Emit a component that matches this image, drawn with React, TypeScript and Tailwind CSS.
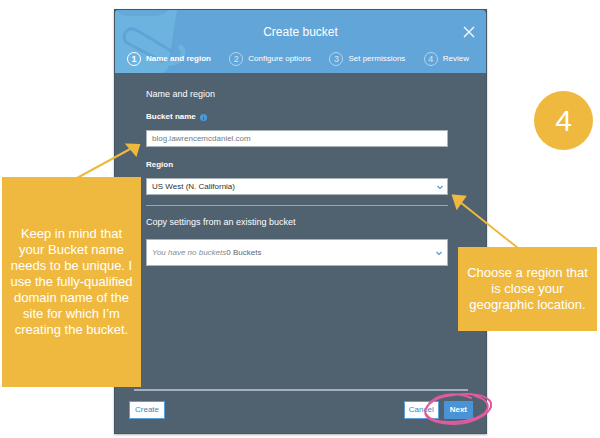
import React from "react";

const steps = ["Name and region", "Configure options", "Set permissions", "Review"];

function BucketArt() {
  return (
    <svg className="absolute left-0 top-0 h-[63px] w-[72px]" viewBox="0 0 72 63" aria-hidden="true">
      <path d="M0 0H62L53 58Q52 62 46 63H0Z" fill="#6cb3e0" />
      <path d="M1 0H53Q51 5 40 6H12Q4 5 1 0Z" fill="#64a9da" />
      <path d="M64 36Q70 40 67 47Q63 54 53 53" fill="none" stroke="#6cb3e0" strokeWidth="5" />
      <path d="M58 42L23 21Q14 16 10 23Q7 30 14 34L48 52" fill="none" stroke="#5fa4d6" strokeWidth="3" />
    </svg>
  );
}

function Chevron() {
  return (
    <svg className="pointer-events-none absolute right-1 top-1/2 h-2 w-2 -translate-y-1/2" viewBox="0 0 8 8" aria-hidden="true">
      <path d="M1.500 3L4 5.500L6.500 3" fill="none" stroke="#4c9bd6" strokeWidth="1.2" />
    </svg>
  );
}

function Dialog() {
  return (
    <section role="dialog" aria-labelledby="title" className="ml-[19%] mr-[113px] mt-[9px] border border-[#465763] bg-[#50626f] shadow-[0_1px_2px_rgba(0,0,0,0.3)]">
      <header className="relative overflow-hidden rounded-t-sm bg-[#62a5d8] px-3 pb-[7px] pt-[14px]">
        <BucketArt />
        <div className="relative flex items-center justify-center">
          <h1 id="title" className="text-[12px] leading-[16px]">Create bucket</h1>
          <button aria-label="Close" className="absolute -right-px flex h-3 w-3 items-center justify-center">
            <svg className="h-3 w-3" viewBox="0 0 12 12" aria-hidden="true">
              <path d="M1 1L11 11M11 1L1 11" stroke="#fff" strokeWidth="1.2" />
            </svg>
          </button>
        </div>
        <ol className="relative mt-[12px] flex justify-between pr-[5px]">
          {steps.map((step, i) => (
            <li key={step} className={i === 0 ? "flex items-center gap-[5px] text-[8px] font-bold" : "flex items-center gap-[5px] text-[8px]"}>
              <span className={i === 0 ? "flex h-[14px] w-[14px] items-center justify-center rounded-full border border-white text-[9px] leading-[12px]" : "flex h-[14px] w-[14px] items-center justify-center rounded-full border border-[#b4d5ed] text-[9px] leading-[12px] text-[#d3e6f5]"}>
                {i + 1}
              </span>
              <span className="leading-[12px]">{step}</span>
            </li>
          ))}
        </ol>
      </header>

      <form onSubmit={(e) => e.preventDefault()}>
        <div className="pl-[31px] pr-[38px]">
          <h2 className="pt-[15px] text-[9px] leading-[12px]">Name and region</h2>
          <div className="mt-[12px] flex items-center gap-1 text-[8px] font-bold leading-[10px]">
            <label htmlFor="bucket">Bucket name</label>
            <svg className="h-[7px] w-[7px]" viewBox="0 0 8 8" aria-hidden="true">
              <circle cx="4" cy="4" r="4" fill="#4c9bdc" />
              <path d="M4 1.3V2.4M4 3.3V6.5" stroke="#50626f" strokeWidth="1.3" />
            </svg>
          </div>
          <input id="bucket" defaultValue="blog.lawrencemcdaniel.com" className="mt-[8px] block h-[17px] w-full border border-[#aab4bb] bg-white px-[5px] text-[8px] text-[#737b80] outline-none" />
          <label htmlFor="region" className="mt-[13px] block text-[8px] font-bold leading-[10px]">Region</label>
          <div className="relative mt-[8px]">
            <select id="region" className="block h-[17px] w-full appearance-none border border-[#aab4bb] bg-white px-[5px] text-[8px] text-[#333] outline-none">
              <option>US West (N. California)</option>
            </select>
            <Chevron />
          </div>
          <hr className="mt-[10px] border-[#9aa6ae]" />
          <label htmlFor="copy" className="mt-[10px] block text-[9px] leading-[12px]">Copy settings from an existing bucket</label>
          <div className="relative mt-[11px] flex h-[27px] items-center border border-[#aab4bb] bg-white pl-[5px] text-[8px]">
            <span className="italic text-[#858c91]">You have no buckets</span>
            <select id="copy" className="h-full flex-1 appearance-none bg-white text-[#666] outline-none">
              <option>0 Buckets</option>
            </select>
            <Chevron />
          </div>
        </div>
        <footer className="pb-[14px] pl-[14px] pr-[13px] pt-[123px] text-[8px] leading-[10px]">
          <div className="mx-[5px] h-[2px] bg-[#a5afb9]" />
          <div className="mt-[10px] flex gap-[5px]">
            <button type="button" className="mr-auto h-[18px] border border-[#5ba0d6] bg-white px-[5px] text-[#3f84b8]">Create</button>
            <button type="button" className="h-[18px] border border-[#5ba0d6] bg-white px-[4px] text-[#3f84b8]">Cancel</button>
            <button type="submit" className="h-[18px] bg-[#4a94d5] px-[6px] font-bold">Next</button>
          </div>
        </footer>
      </form>
    </section>
  );
}

export default function App() {
  return (
    <main className="relative flow-root overflow-hidden bg-white pb-[3px] font-['Liberation_Sans',Arial,sans-serif] text-white">
      <Dialog />
      <svg className="pointer-events-none absolute left-0 top-0 h-[438px] w-[600px]" viewBox="0 0 600 438" aria-hidden="true">
        <g stroke="#efb93f" strokeWidth="2" fill="#efb93f">
          <path d="M77 178L132 148M518 248L460 202" />
          <path d="M139 145L127 144.500L136 155ZM453 195.500L465 196.500L457 208Z" />
        </g>
        <path d="M471 398C456 391 433 394 427 407C419 420 440 424 455 424C477 423 493 412 491 403C488 394 468 392 447 396C430 399 423 409 426 414C433 425 462 423 476 418C489 413 491 405 483 399L471 394" fill="none" stroke="#df5a9f" strokeLinecap="round" strokeWidth="2" />
      </svg>
      <aside className="absolute left-[2px] top-[177px] flex h-[210px] w-[139px] items-center justify-center bg-[#efb93f] text-center text-[13px] leading-[16px]">
        <p>Keep in mind that<br />your Bucket name<br />needs to be unique. I<br />use the fully-qualified<br />domain name of the<br />site for which I’m<br />creating the bucket.</p>
      </aside>
      <aside className="absolute left-[458px] top-[247px] flex h-[84px] w-[139px] items-center justify-center bg-[#efb93f] text-center text-[13px] leading-[16px]">
        <p>Choose a region that<br />is close your<br />geographic location.</p>
      </aside>
      <div className="absolute left-[534px] top-[91px] flex h-[59px] w-[59px] items-center justify-center rounded-full bg-[#efb93f] text-[30px] leading-none">4</div>
    </main>
  );
}
